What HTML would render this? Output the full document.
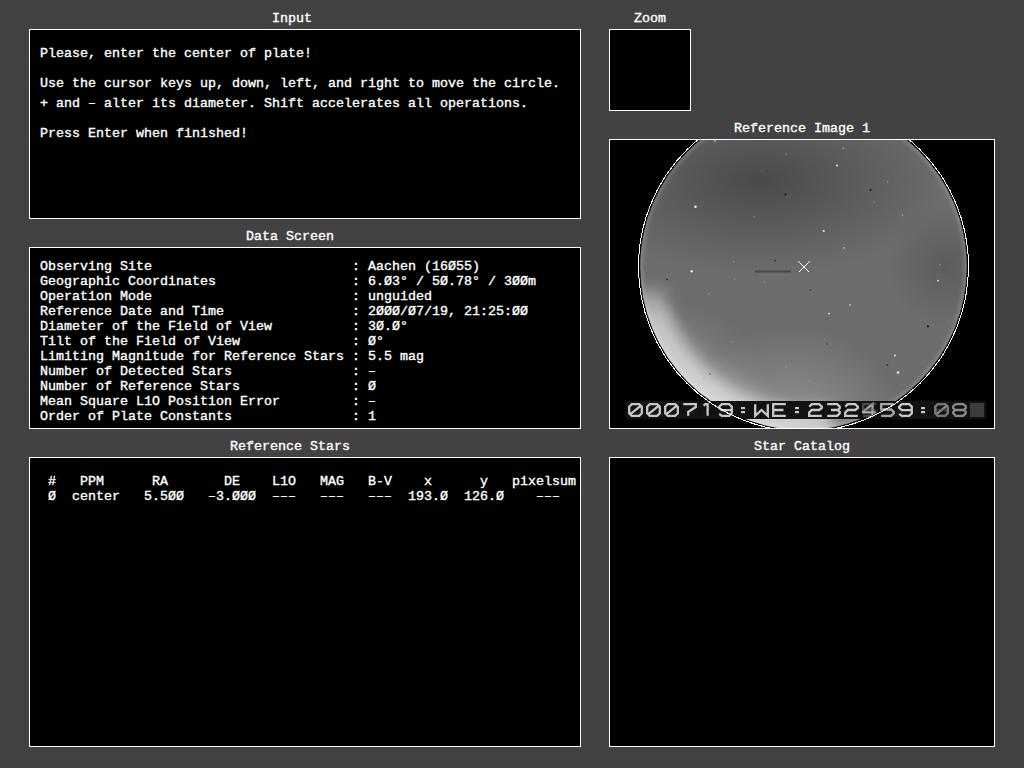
<!DOCTYPE html>
<html><head><meta charset="utf-8">
<style>
html,body{margin:0;padding:0;width:1024px;height:768px;overflow:hidden;background:#424242;}
body{position:relative;font-family:"Liberation Mono",monospace;font-weight:normal;font-size:13.3333px;color:#fff;-webkit-text-stroke:0.35px #fff;}
.box{position:absolute;box-sizing:border-box;border:1px solid #fff;background:#000;}
.t{position:absolute;white-space:pre;line-height:15px;}
</style></head><body>
<!-- titles -->
<div class="t" style="left:272px;top:11px">Input</div>
<div class="t" style="left:634px;top:11px">Zoom</div>
<div class="t" style="left:246px;top:229px">Data Screen</div>
<div class="t" style="left:734px;top:121px">Reference Image 1</div>
<div class="t" style="left:230px;top:439px">Reference Stars</div>
<div class="t" style="left:754px;top:439px">Star Catalog</div>

<!-- boxes -->
<div class="box" style="left:29px;top:29px;width:552px;height:190px"></div>
<div class="box" style="left:609px;top:29px;width:82px;height:82px"></div>
<div class="box" style="left:29px;top:247px;width:552px;height:182px"></div>
<div class="box" style="left:609px;top:139px;width:386px;height:290px"></div>
<div class="box" style="left:29px;top:457px;width:552px;height:290px"></div>
<div class="box" style="left:609px;top:457px;width:386px;height:290px"></div>

<!-- refimg -->
<svg style="position:absolute;left:610px;top:140px" width="384" height="288" viewBox="610 140 384 288">
<defs>
<clipPath id="dc"><circle cx="803.5" cy="266.5" r="163.3"/></clipPath>
<radialGradient id="gTop" cx="760" cy="180" r="190" gradientUnits="userSpaceOnUse" gradientTransform="translate(760 180) scale(1 0.5) translate(-760 -180)">
<stop offset="0" stop-color="#000" stop-opacity="0.32"/><stop offset="1" stop-color="#000" stop-opacity="0"/></radialGradient>
<radialGradient id="gR" cx="945" cy="265" r="60" gradientUnits="userSpaceOnUse">
<stop offset="0" stop-color="#000" stop-opacity="0.15"/><stop offset="1" stop-color="#000" stop-opacity="0"/></radialGradient>
<radialGradient id="gLL" cx="1000" cy="0" r="510" gradientUnits="userSpaceOnUse">
<stop offset="0.88" stop-color="#fff" stop-opacity="0"/><stop offset="0.95" stop-color="#fff" stop-opacity="0.2"/><stop offset="1" stop-color="#fff" stop-opacity="0.45"/></radialGradient>
<radialGradient id="gLL2" cx="665" cy="410" r="110" gradientUnits="userSpaceOnUse">
<stop offset="0" stop-color="#fff" stop-opacity="0.25"/><stop offset="1" stop-color="#fff" stop-opacity="0"/></radialGradient>
<radialGradient id="gBot" cx="790" cy="445" r="120" gradientUnits="userSpaceOnUse">
<stop offset="0" stop-color="#fff" stop-opacity="0.3"/><stop offset="1" stop-color="#fff" stop-opacity="0"/></radialGradient>
<radialGradient id="gLimb" cx="803.5" cy="266.5" r="163.3" gradientUnits="userSpaceOnUse">
<stop offset="0.965" stop-color="#fff" stop-opacity="0"/><stop offset="1" stop-color="#fff" stop-opacity="0.15"/></radialGradient>
<filter id="bl" x="-50%" y="-50%" width="200%" height="200%"><feGaussianBlur stdDeviation="7"/></filter>
<linearGradient id="arcg" x1="640" y1="270" x2="655" y2="320" gradientUnits="userSpaceOnUse"><stop offset="0" stop-color="#fff" stop-opacity="0"/><stop offset="1" stop-color="#fff" stop-opacity="0.5"/></linearGradient>
</defs>
<rect x="610" y="140" width="384" height="288" fill="#000"/>
<g clip-path="url(#dc)">
<rect x="610" y="100" width="400" height="340" fill="#6d6d6d"/>
<rect x="610" y="100" width="400" height="340" fill="url(#gTop)"/>
<rect x="610" y="100" width="400" height="340" fill="url(#gR)"/>
<rect x="610" y="100" width="400" height="340" fill="url(#gLL)"/>
<rect x="610" y="100" width="400" height="340" fill="url(#gLL2)"/>
<rect x="610" y="100" width="400" height="340" fill="url(#gBot)"/>
<path d="M642.1,289.2 A163,163 0 0 0 831.8,427.0" fill="none" stroke="url(#arcg)" stroke-width="44" filter="url(#bl)"/>
<rect x="610" y="100" width="400" height="340" fill="url(#gLimb)"/>
<circle cx="695.5" cy="206.7" r="1.3" fill="#e8e8e8"/>
<circle cx="691.7" cy="271.2" r="1.2" fill="#e8e8e8"/>
<circle cx="823.7" cy="231" r="1.1" fill="#e8e8e8"/>
<circle cx="837" cy="165.5" r="1.0" fill="#e8e8e8"/>
<circle cx="829" cy="313.6" r="0.9" fill="#e8e8e8"/>
<circle cx="850" cy="305" r="0.8" fill="#e8e8e8"/>
<circle cx="895" cy="355.6" r="1.0" fill="#e8e8e8"/>
<circle cx="898" cy="372.5" r="1.3" fill="#e8e8e8"/>
<circle cx="938" cy="280.6" r="0.9" fill="#e8e8e8"/>
<circle cx="844" cy="248" r="0.8" fill="#e8e8e8"/>
<circle cx="715" cy="141" r="0.8" fill="#e8e8e8"/>
<circle cx="754" cy="217" r="0.7" fill="#a8a8a8"/>
<circle cx="733.7" cy="261.9" r="0.7" fill="#a8a8a8"/>
<circle cx="708.6" cy="293.7" r="0.7" fill="#a8a8a8"/>
<circle cx="668" cy="322" r="0.7" fill="#a8a8a8"/>
<circle cx="764.5" cy="281.7" r="0.7" fill="#a8a8a8"/>
<circle cx="902.5" cy="215" r="0.7" fill="#a8a8a8"/>
<circle cx="786" cy="154" r="0.7" fill="#a8a8a8"/>
<circle cx="785.5" cy="194.4" r="1.1" fill="#1a1a1a"/>
<circle cx="870.6" cy="190" r="1.0" fill="#1a1a1a"/>
<circle cx="928" cy="326.4" r="1.1" fill="#1a1a1a"/>
<circle cx="667" cy="279.5" r="0.8" fill="#1a1a1a"/>
<circle cx="887.5" cy="365" r="0.8" fill="#1a1a1a"/>
<circle cx="775" cy="260.7" r="0.8" fill="#1a1a1a"/>
<circle cx="843.6" cy="148.4" r="0.8" fill="#a0a0a0"/>
<circle cx="874" cy="202" r="0.7" fill="#a0a0a0"/>
<circle cx="887.7" cy="182" r="0.7" fill="#a0a0a0"/>
<circle cx="940" cy="264.7" r="0.7" fill="#a0a0a0"/>
<circle cx="786" cy="367" r="0.7" fill="#a0a0a0"/>
<circle cx="809.6" cy="380.7" r="0.7" fill="#a0a0a0"/>
<circle cx="732" cy="341.6" r="0.7" fill="#a0a0a0"/>
<circle cx="704" cy="378" r="0.7" fill="#a0a0a0"/>
<circle cx="734.6" cy="279" r="0.8" fill="#a0a0a0"/>
<circle cx="810.4" cy="290" r="0.7" fill="#303030"/>
<circle cx="766.7" cy="171" r="0.7" fill="#303030"/>
<circle cx="827" cy="344" r="0.7" fill="#303030"/>
<circle cx="710" cy="374" r="0.7" fill="#303030"/>
<path d="M755,271.5H791" stroke="#4a4a4a" stroke-width="1.8"/>
</g>
<path d="M798.5,261.5L809.5,272.5M809.5,261.5L798.5,272.5" stroke="#fff" stroke-width="1" shape-rendering="crispEdges"/>
<rect x="626" y="401" width="360" height="18" fill="#121212"/>
<path transform="translate(628,403)" d="M3.8,1.2H11.200000000000001L13.8,3.8V10.200000000000001L11.200000000000001,12.8H3.8L1.2,10.200000000000001V3.8Z M3.0,10.600000000000001L12.0,3.4000000000000004" fill="none" stroke="#c8c8c8" stroke-width="2.3"/>
<path transform="translate(646,403)" d="M3.8,1.2H11.200000000000001L13.8,3.8V10.200000000000001L11.200000000000001,12.8H3.8L1.2,10.200000000000001V3.8Z M3.0,10.600000000000001L12.0,3.4000000000000004" fill="none" stroke="#c8c8c8" stroke-width="2.3"/>
<path transform="translate(664,403)" d="M3.8,1.2H11.200000000000001L13.8,3.8V10.200000000000001L11.200000000000001,12.8H3.8L1.2,10.200000000000001V3.8Z M3.0,10.600000000000001L12.0,3.4000000000000004" fill="none" stroke="#c8c8c8" stroke-width="2.3"/>
<path transform="translate(682,403)" d="M1.2,1.2H13.8V4.0L6.2,8.8V12.8" fill="none" stroke="#c8c8c8" stroke-width="2.3"/>
<path transform="translate(700,403)" d="M3.5,2.7L5.5,1.2H7.6V12.8" fill="none" stroke="#c8c8c8" stroke-width="2.3"/>
<path transform="translate(718,403)" d="M13.8,7.2H3.8L1.2,5V3.8L3.8,1.2H11.200000000000001L13.8,3.8V10.200000000000001L11.200000000000001,12.8H3.8L1.2,10.8" fill="none" stroke="#c8c8c8" stroke-width="2.3"/>
<rect x="741" y="407" width="4" height="2.2" fill="#c8c8c8"/><rect x="741" y="411" width="4" height="2.2" fill="#c8c8c8"/>
<path transform="translate(754,403)" d="M1.2,1.2V12.8L7.5,7.0L13.8,12.8V1.2" fill="none" stroke="#c8c8c8" stroke-width="2.3"/>
<path transform="translate(772,403)" d="M13.8,1.2H1.2V12.8H13.8M1.2,7.0H11.5" fill="none" stroke="#c8c8c8" stroke-width="2.3"/>
<rect x="795" y="407" width="4" height="2.2" fill="#c8c8c8"/><rect x="795" y="411" width="4" height="2.2" fill="#c8c8c8"/>
<path transform="translate(808,403)" d="M1.2,3.8L3.8,1.2H11.200000000000001L13.8,3.8V5.0L11.200000000000001,7.0H3.8L1.2,9.6V12.8H13.8" fill="none" stroke="#c8c8c8" stroke-width="2.3"/>
<path transform="translate(826,403)" d="M1.2,1.2H11.200000000000001L13.8,3.8V5.0L11.8,7.0H5M11.8,7.0L13.8,9.0V10.200000000000001L11.200000000000001,12.8H1.2" fill="none" stroke="#c8c8c8" stroke-width="2.3"/>
<path transform="translate(844,403)" d="M1.2,3.8L3.8,1.2H11.200000000000001L13.8,3.8V5.0L11.200000000000001,7.0H3.8L1.2,9.6V12.8H13.8" fill="none" stroke="#c8c8c8" stroke-width="2.3"/>
<path transform="translate(862,403)" d="M10.5,12.8V1.2L1.2,8.5V9.3H13.8" fill="none" stroke="#a8a8a8" stroke-width="2.3"/>
<path transform="translate(880,403)" d="M13.8,1.2H1.2V6.5H11.200000000000001L13.8,9.1V10.200000000000001L11.200000000000001,12.8H1.2" fill="none" stroke="#a8a8a8" stroke-width="2.3"/>
<path transform="translate(898,403)" d="M13.8,7.2H3.8L1.2,5V3.8L3.8,1.2H11.200000000000001L13.8,3.8V10.200000000000001L11.200000000000001,12.8H3.8L1.2,10.8" fill="none" stroke="#c8c8c8" stroke-width="2.3"/>
<rect x="921" y="407" width="4" height="2.2" fill="#c8c8c8"/><rect x="921" y="411" width="4" height="2.2" fill="#c8c8c8"/>
<path transform="translate(934,403)" d="M3.8,1.2H11.200000000000001L13.8,3.8V10.200000000000001L11.200000000000001,12.8H3.8L1.2,10.200000000000001V3.8Z M3.0,10.600000000000001L12.0,3.4000000000000004" fill="none" stroke="#8a8a8a" stroke-width="2.3"/>
<path transform="translate(952,403)" d="M3.8,1.2H11.200000000000001L13.8,3.2V5.0L11.8,7.0H3.2L1.2,5.0V3.2Z M3.2,7.0H11.8L13.8,9.0V10.200000000000001L11.200000000000001,12.8H3.8L1.2,10.200000000000001V9.0Z" fill="none" stroke="#8a8a8a" stroke-width="2.3"/>
<path transform="translate(862,403)" d="M13.8,1.2H1.2V6.5H11.200000000000001L13.8,9.1V10.200000000000001L11.200000000000001,12.8H1.2" fill="none" stroke="#707070" stroke-width="2.3" opacity="0.6"/>
<path transform="translate(934,403)" d="M3.8,1.2H11.200000000000001L13.8,3.2V5.0L11.8,7.0H3.2L1.2,5.0V3.2Z M3.2,7.0H11.8L13.8,9.0V10.200000000000001L11.200000000000001,12.8H3.8L1.2,10.200000000000001V9.0Z" fill="none" stroke="#606060" stroke-width="2.3" opacity="0.5"/>
<rect x="970" y="403" width="14" height="14" fill="#3c3c3c"/>
<circle cx="803.5" cy="266.5" r="165" fill="none" stroke="#fff" stroke-width="1" shape-rendering="crispEdges"/>
</svg>
<!-- /refimg -->
<!-- input text -->
<div class="t" style="left:40px;top:46px">Please, enter the center of plate!</div>
<div class="t" style="left:40px;top:76px">Use the cursor keys up, down, left, and right to move the circle.</div>
<div class="t" style="left:40px;top:96px">+ and – alter its diameter. Shift accelerates all operations.</div>
<div class="t" style="left:40px;top:126px">Press Enter when finished!</div>

<!-- data screen -->
<div class="t" style="left:40px;top:259px">Observing Site                         : Aachen (16Ø55)
Geographic Coordinates                 : 6.Ø3° / 5Ø.78° / 3ØØm
Operation Mode                         : unguided
Reference Date and Time                : 2ØØØ/Ø7/19, 21:25:ØØ
Diameter of the Field of View          : 3Ø.Ø°
Tilt of the Field of View              : Ø°
Limiting Magnitude for Reference Stars : 5.5 mag
Number of Detected Stars               : –
Number of Reference Stars              : Ø
Mean Square L1O Position Error         : –
Order of Plate Constants               : 1</div>

<!-- reference stars -->
<div class="t" style="left:40px;top:474px"> #   PPM      RA       DE    L1O   MAG   B-V    x      y   pixelsum
 Ø  center   5.5ØØ   –3.ØØØ  –––   –––   –––  193.Ø  126.Ø    –––</div>

</body></html>
